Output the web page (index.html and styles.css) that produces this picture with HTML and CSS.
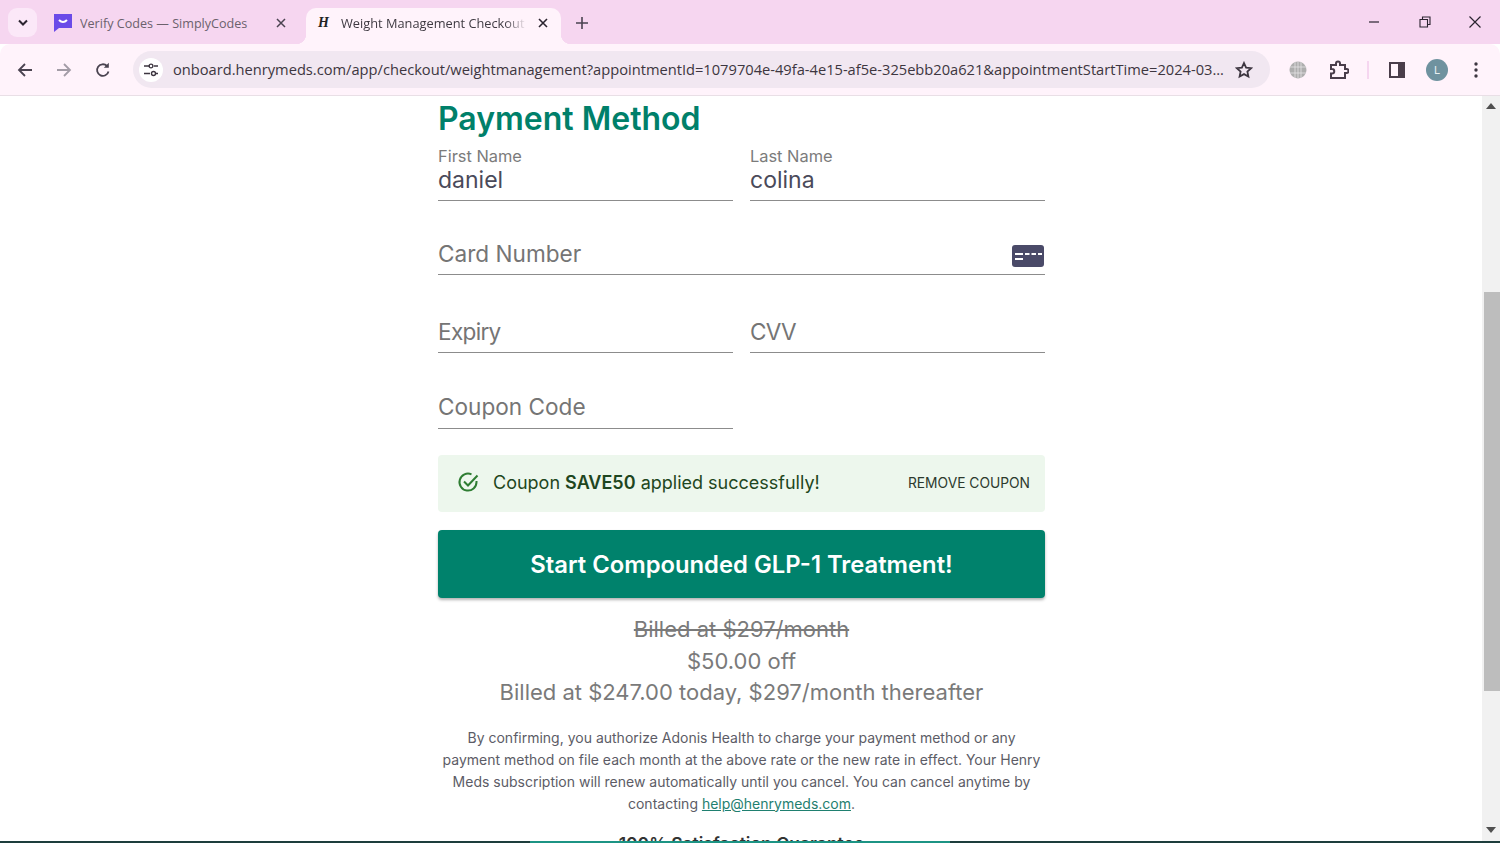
FILE: index.html
```html
<!DOCTYPE html>
<html lang="en">
  <head>
    <meta charset="UTF-8" />
    <meta name="viewport" content="width=device-width, initial-scale=1.0" />
    <title>Weight Management Checkout</title>
    <link rel="stylesheet" href="styles.css">
  </head>
  <body>
    <div class="window">
      <!-- Tab strip -->
      <header class="tabstrip">
        <button class="tab-search">
          <svg width="12" height="8" viewBox="0 0 12 8"><path d="M2 1.5l4 4 4-4" fill="none" stroke="#2b2430" stroke-width="2"/></svg>
        </button>
        <div class="tab">
          <svg class="favicon" width="20" height="20" viewBox="0 0 20 20"><path d="M1 1h18v14H6l-5 4z" fill="#6a4be8"/><path d="M6 7q4 4 8 0" fill="none" stroke="#fff" stroke-width="2"/></svg>
          <span class="tab-title">Verify Codes — SimplyCodes</span>
          <svg class="tab-close" width="10" height="10" viewBox="0 0 10 10"><path d="M1 1l8 8M9 1l-8 8" stroke="#4a4350" stroke-width="1.5"/></svg>
        </div>
        <div class="tab tab-active">
          <span class="favicon-h">H</span>
          <span class="tab-title">Weight Management Checkout</span>
          <svg class="tab-close" width="10" height="10" viewBox="0 0 10 10"><path d="M1 1l8 8M9 1l-8 8" stroke="#2b2430" stroke-width="1.6"/></svg>
        </div>
        <svg class="new-tab" width="12" height="12" viewBox="0 0 12 12"><path d="M6 0v12M0 6h12" stroke="#4a4350" stroke-width="1.6"/></svg>
        <div class="window-controls">
          <svg width="12" height="12" viewBox="0 0 12 12"><path d="M1 6h10" stroke="#2b2430" stroke-width="1.2"/></svg>
          <svg class="restore" width="12" height="12" viewBox="0 0 12 12"><path d="M1 3.5h7.5V11H1zM3.5 3.5V1H11v7.5H8.5" fill="none" stroke="#2b2430" stroke-width="1.1"/></svg>
          <svg width="14" height="14" viewBox="0 0 14 14"><path d="M1.5 1.5l11 11M12.5 1.5l-11 11" stroke="#2b2430" stroke-width="1.2"/></svg>
        </div>
      </header>

      <!-- Toolbar -->
      <nav class="toolbar">
        <div class="nav-buttons">
          <svg width="16" height="16" viewBox="0 0 16 16"><path d="M15 8H2M8 2L2 8l6 6" fill="none" stroke="#4a4350" stroke-width="1.8"/></svg>
          <svg width="16" height="16" viewBox="0 0 16 16"><path d="M1 8h13M8 2l6 6-6 6" fill="none" stroke="#a39ca6" stroke-width="1.8"/></svg>
          <svg width="16" height="16" viewBox="0 0 16 16"><path d="M13.5 9.5A5.8 5.8 0 1 1 12 4" fill="none" stroke="#4a4350" stroke-width="1.8"/><path d="M13.8 0.8v5h-5z" fill="#4a4350"/></svg>
        </div>
        <div class="omnibox">
          <span class="site-info">
            <svg width="16" height="14" viewBox="0 0 16 14"><path d="M1 3h6M1 10.5h6M11 3h4M13 10.5h2" stroke="#3d3640" stroke-width="1.6"/><circle cx="9" cy="3" r="1.9" fill="none" stroke="#3d3640" stroke-width="1.4" transform="translate(-1 0)"/><circle cx="10.5" cy="10.5" r="2" fill="none" stroke="#3d3640" stroke-width="1.4"/></svg>
          </span>
          <span class="url">onboard.henrymeds.com/app/checkout/weightmanagement?appointmentId=1079704e-49fa-4e15-af5e-325ebb20a621&amp;appointmentStartTime=2024-03...</span>
          <svg class="star" width="18" height="18" viewBox="0 0 18 18"><path d="M9 2l2.1 4.6 5 .6-3.7 3.4 1 5L9 13.1l-4.4 2.5 1-5L1.900 7.200l5-.6z" fill="none" stroke="#3d3640" stroke-width="1.8"/></svg>
        </div>
        <div class="toolbar-icons">
          <svg class="globe" width="18" height="18" viewBox="0 0 18 18"><circle cx="9" cy="9" r="8.500" fill="#aeaeae"/><path d="M1 6h16M1 12h16M6 1v16M12 1v16M9 .5v17" stroke="#e6e3e6" stroke-width=".8"/></svg>
          <svg class="puzzle" width="20" height="20" viewBox="0 0 20 20"><path d="M2 5h5V3.500a2 2 0 0 1 4 0V5h5v4h1.500a2 2 0 0 1 0 4H16v5H2v-4.500h1a2.200 2.200 0 0 0 0-4.500H2z" fill="none" stroke="#4a3d4a" stroke-width="2"/></svg>
          <span class="toolbar-sep"></span>
          <svg class="panel" width="16" height="16" viewBox="0 0 16 16"><rect x="1" y="1" width="14" height="14" fill="none" stroke="#4a3d4a" stroke-width="2"/><rect x="9" y="1" width="6" height="14" fill="#4a3d4a"/></svg>
          <span class="avatar">L</span>
          <svg class="menu" width="4" height="16" viewBox="0 0 4 16"><circle cx="2" cy="2" r="1.700" fill="#3d3640"/><circle cx="2" cy="8" r="1.700" fill="#3d3640"/><circle cx="2" cy="14" r="1.700" fill="#3d3640"/></svg>
        </div>
      </nav>

      <div class="viewport">
        <main class="page">
          <section class="checkout">
            <h1>Payment Method</h1>

            <div class="form-row row-name">
              <div class="field field-filled">
                <label>First Name</label>
                <div class="value">daniel</div>
              </div>
              <div class="field field-filled">
                <label>Last Name</label>
                <div class="value">colina</div>
              </div>
            </div>

            <div class="form-row row-card">
              <div class="field field-wide">
                <div class="placeholder">Card Number</div>
                <svg class="card-icon" width="32" height="22" viewBox="0 0 32 22"><rect width="32" height="22" rx="3" fill="#4a4a68"/><path d="M3 9h8M13 9h4.500M19.500 9h4.500M26 9h4M3 14h8" stroke="#fff" stroke-width="2"/></svg>
              </div>
            </div>

            <div class="form-row row-expiry">
              <div class="field"><div class="placeholder">Expiry</div></div>
              <div class="field"><div class="placeholder">CVV</div></div>
            </div>

            <div class="form-row row-coupon">
              <div class="field"><div class="placeholder">Coupon Code</div></div>
            </div>

            <div class="alert">
              <svg class="alert-icon" width="24" height="24" viewBox="0 0 24 24"><path d="M20.500 11v1a8.500 8.500 0 1 1-5-7.700" fill="none" stroke="#2e7d32" stroke-width="2"/><path d="M8 11.500l4 4 9.500-10" fill="none" stroke="#2e7d32" stroke-width="2"/></svg>
              <p class="alert-text">Coupon <strong>SAVE50</strong> applied successfully!</p>
              <button class="alert-action">Remove Coupon</button>
            </div>

            <button class="submit">Start Compounded GLP-1 Treatment!</button>

            <div class="pricing">
              <div class="old-price">Billed at $297/month</div>
              <div>$50.00 off</div>
              <div>Billed at $247.00 today, $297/month thereafter</div>
            </div>

            <p class="terms">
              By confirming, you authorize Adonis Health to charge your payment method or any
              payment method on file each month at the above rate or the new rate in effect. Your Henry
              Meds subscription will renew automatically until you cancel. You can cancel anytime by
              contacting <a href="#">help@henrymeds.com</a>.
            </p>

            <h2>100% Satisfaction Guarantee</h2>
          </section>
        </main>

        <div class="scrollbar">
          <span class="arrow-up"></span>
          <div class="thumb"></div>
          <span class="arrow-down"></span>
        </div>
      </div>

      <div class="edge-line"></div>
    </div>
  </body>
</html>
```

FILE: styles.css
```css
* {
  box-sizing: border-box;
  margin: 0;
  padding: 0;
}

html,
body {
  height: 100%;
  overflow: hidden;
}

body {
  font-family: Inter, "Open Sans", sans-serif;
  background: #fff;
}

button {
  border: none;
  background: none;
  font-family: inherit;
}

.window {
  position: relative;
  height: 843px;
  display: flex;
  flex-direction: column;
}

/* Tab strip */
.tabstrip {
  height: 44px;
  flex: none;
  display: flex;
  align-items: flex-end;
  background: #f6d6f0;
  padding-left: 8px;
  font-family: "Open Sans", sans-serif;
}

.tab-search {
  width: 29px;
  height: 29px;
  margin-bottom: 7px;
  border-radius: 9px;
  background: #fbe8f8;
  display: flex;
  align-items: center;
  justify-content: center;
}

.tab {
  position: relative;
  width: 255px;
  height: 36px;
  margin-left: 14px;
  display: flex;
  align-items: center;
  padding-bottom: 6px;
  font-size: 12.6px;
  color: #6b616c;
}

.tab .favicon {
  margin-left: 2px;
  margin-right: 7px;
  flex: none;
}

.tab .tab-title {
  flex: 1;
  white-space: nowrap;
  overflow: hidden;
}

.tab .tab-close {
  margin-right: 20px;
  flex: none;
}

.tab-active {
  width: 255px;
  margin-left: 0;
  background: #fff3fb;
  border-radius: 10px 10px 0 0;
  color: #3f3a42;
  font-size: 12.8px;
  padding-left: 12px;
}

/* flared corners at the foot of the active tab */
.tab-active::before,
.tab-active::after {
  content: "";
  position: absolute;
  bottom: 0;
  width: 10px;
  height: 10px;
}

.tab-active::before {
  left: -10px;
  background: radial-gradient(circle at 0 0, transparent 10px, #fff3fb 10.5px);
}

.tab-active::after {
  right: -10px;
  background: radial-gradient(circle at 100% 0, transparent 10px, #fff3fb 10.5px);
}

.tab-active .tab-title {
  -webkit-mask-image: linear-gradient(to right, #000 88%, transparent 100%);
  mask-image: linear-gradient(to right, #000 88%, transparent 100%);
}

.tab-active .tab-close {
  margin-left: 11px;
  margin-right: 13px;
}

.favicon-h {
  width: 23px;
  font-family: "Liberation Serif", serif;
  font-style: italic;
  font-weight: 700;
  font-size: 14px;
  color: #222;
  flex: none;
}

.new-tab {
  margin: 0 0 15px 15px;
}

.window-controls {
  margin-left: auto;
  height: 44px;
  display: flex;
  align-items: center;
  gap: 38px;
  padding-right: 18px;
}

.restore {
  margin: 0 -1px 0 1px;
}

/* Toolbar */
.toolbar {
  height: 52px;
  flex: none;
  display: flex;
  align-items: center;
  background: #fff3fb;
  border-bottom: 1px solid #e9dfe6;
  border-radius: 10px 10px 0 0;
}

.nav-buttons {
  width: 133px;
  flex: none;
  display: flex;
  align-items: center;
  gap: 23px;
  padding-left: 17px;
}

.omnibox {
  width: 1137px;
  height: 37px;
  flex: none;
  display: flex;
  align-items: center;
  border-radius: 19px;
  background: #f1e7f1;
  padding-left: 6px;
}

.site-info {
  width: 24px;
  height: 24px;
  flex: none;
  border-radius: 50%;
  background: #fff;
  display: flex;
  align-items: center;
  justify-content: center;
}

.url {
  width: 1053px;
  flex: none;
  margin-left: 10px;
  margin-bottom: 1px;
  font-family: "Open Sans", sans-serif;
  font-size: 14.67px;
  color: #3d3640;
  white-space: nowrap;
  overflow: hidden;
}

.star {
  margin-left: 9px;
  flex: none;
}

.toolbar-icons {
  flex: 1;
  display: flex;
  align-items: center;
  padding-left: 19px;
}

.puzzle {
  margin-left: 22px;
}

.toolbar-sep {
  width: 2px;
  height: 18px;
  margin-left: 18px;
  background: #f6d6f0;
}

.panel {
  margin-left: 20px;
}

.avatar {
  width: 22px;
  height: 22px;
  margin-left: 21px;
  border-radius: 50%;
  background: #6f929f;
  color: #e8f0f2;
  font-size: 11px;
  display: flex;
  align-items: center;
  justify-content: center;
}

.menu {
  margin-left: 26px;
}

/* Page */
.viewport {
  flex: 1;
  min-height: 0;
  display: flex;
}

.page {
  flex: 1;
  overflow: hidden;
}

.checkout {
  width: 607px;
  margin-left: 438px;
}

h1 {
  height: 44px;
  font-size: 32px;
  line-height: 46px;
  font-weight: 600;
  color: #00806a;
}

.form-row {
  display: flex;
  gap: 17px;
}

.row-name {
  margin-top: 5px;
}

.row-card {
  margin-top: 26px;
}

.row-expiry {
  margin-top: 30px;
}

.row-coupon {
  margin-top: 28px;
}

.field {
  position: relative;
  width: 295px;
  height: 48px;
  border-bottom: 1px solid #8c8c8c;
}

.field-filled {
  height: 56px;
}

.field-wide {
  width: 100%;
}

.field label {
  display: block;
  font-size: 16.4px;
  line-height: 22px;
  color: #7b7b7b;
}

.value {
  font-size: 23px;
  line-height: 27px;
  color: #4a4a5a;
}

.placeholder {
  padding-top: 13px;
  font-size: 22.6px;
  line-height: 28px;
  color: #757575;
}

.row-expiry .placeholder {
  letter-spacing: -0.7px;
}

.row-coupon .placeholder {
  padding-top: 12px;
}

.card-icon {
  position: absolute;
  right: 1px;
  bottom: 7px;
}

.alert {
  height: 57px;
  margin-top: 26px;
  display: flex;
  align-items: center;
  padding: 0 15px 2px 18px;
  background: #edf7ed;
  border-radius: 4px;
  color: #1e4620;
}

.alert-icon {
  margin-bottom: 2px;
}

.alert-text {
  margin-left: 13px;
  font-size: 18px;
}

.alert-text strong {
  font-weight: 600;
}

.alert-action {
  margin-left: auto;
  font-size: 13.8px;
  text-transform: uppercase;
  color: #2c3a2d;
}

.submit {
  width: 100%;
  height: 68px;
  margin-top: 18px;
  display: block;
  background: #00826c;
  border-radius: 4px;
  box-shadow: 0 2px 3px rgba(0, 0, 0, 0.3);
  color: #fff;
  font-size: 23.8px;
  font-weight: 600;
}

.pricing {
  margin-top: 16px;
  text-align: center;
  font-size: 22px;
  line-height: 31.500px;
  color: #7a7a7a;
}

.old-price {
  text-decoration: line-through;
}

.terms {
  margin-top: 18px;
  text-align: center;
  font-size: 14px;
  line-height: 22px;
  color: #5c5c66;
}

.terms a {
  color: #1f8070;
}

h2 {
  margin-top: 17px;
  text-align: center;
  font-size: 17.5px;
  line-height: 24px;
  font-weight: 600;
  color: #333;
}

/* Scrollbar */
.scrollbar {
  position: relative;
  width: 18px;
  flex: none;
  display: flex;
  flex-direction: column;
  align-items: center;
  background: #f1f1f1;
}

.arrow-up {
  margin-top: 7px;
  border: 5px solid transparent;
  border-top: 0;
  border-bottom: 6px solid #505050;
}

.thumb {
  width: 16px;
  height: 399px;
  margin-top: 183px;
  margin-left: 1px;
  background: #bdbdbd;
}

.arrow-down {
  margin-top: 136px;
  border: 5px solid transparent;
  border-bottom: 0;
  border-top: 6px solid #505050;
}

/* Thin dark line along the bottom edge of the capture */
.edge-line {
  position: absolute;
  left: 0;
  right: 0;
  bottom: 0;
  height: 2px;
  background: linear-gradient(to right, #1d3d3c 0, #1d3d3c 530px, #1c9484 530px, #1c9484 950px, #1d3d3c 950px);
}
```
